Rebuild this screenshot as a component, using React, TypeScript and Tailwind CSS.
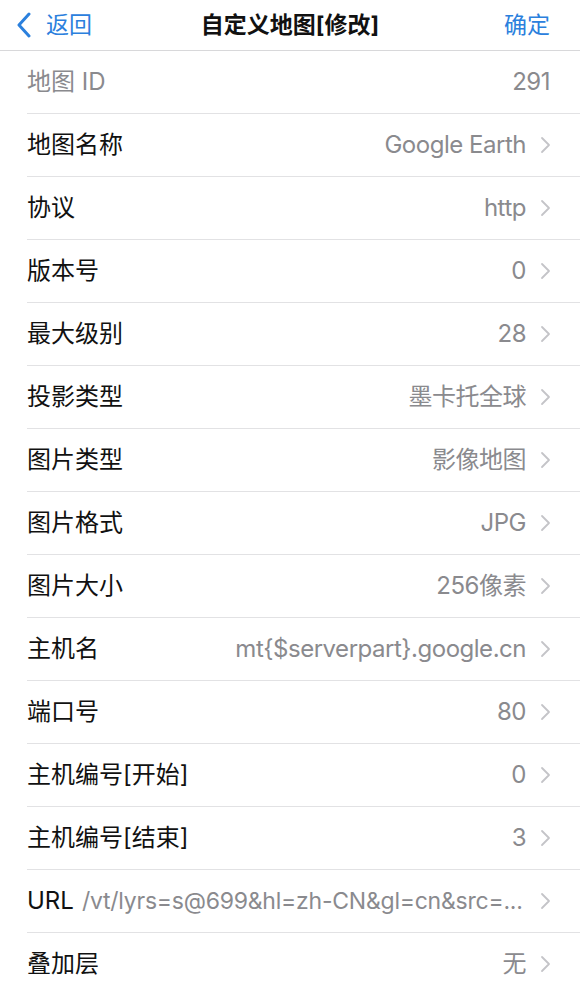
const font = "font-['Inter','Noto_Sans_CJK_SC',sans-serif]";

type Row = { label: string; value: string };

const rows: Row[] = [
  { label: "地图名称", value: "Google Earth" },
  { label: "协议", value: "http" },
  { label: "版本号", value: "0" },
  { label: "最大级别", value: "28" },
  { label: "投影类型", value: "墨卡托全球" },
  { label: "图片类型", value: "影像地图" },
  { label: "图片格式", value: "JPG" },
  { label: "图片大小", value: "256像素" },
  { label: "主机名", value: "mt{$serverpart}.google.cn" },
  { label: "端口号", value: "80" },
  { label: "主机编号[开始]", value: "0" },
  { label: "主机编号[结束]", value: "3" },
];

function Chevron() {
  return (
    <svg width="11" height="18" viewBox="0 0 11 18" className="ml-[14px] shrink-0" aria-hidden>
      <path d="M2 2l7 7-7 7" fill="none" stroke="#c4c4c8" strokeWidth="1.8" strokeLinecap="round" strokeLinejoin="round" />
    </svg>
  );
}

function Cell({ label, value }: Row) {
  return (
    <div className="ml-[27px] h-[63px] flex items-center border-b border-[#e2e2e4] pr-[29px]">
      <span className="text-[24px] text-[#111] whitespace-nowrap">{label}</span>
      <span className="flex-1 text-right text-[24px] tracking-[-0.02em] text-[#8a8a8e] whitespace-nowrap">{value}</span>
      <Chevron />
    </div>
  );
}

export default function App() {
  return (
    <div className={`w-[580px] h-[985px] bg-white overflow-hidden ${font}`}>
      <header className="h-[51px] border-b border-[#d8d8da] flex items-center relative">
        <div className="flex items-center pl-[17px] text-[#2b80dd]">
          <svg width="14" height="26" viewBox="0 0 14 26" aria-hidden>
            <path d="M12 2L2 13l10 11" fill="none" stroke="#2b80dd" strokeWidth="3" strokeLinecap="round" strokeLinejoin="round" />
          </svg>
          <span className="ml-[15px] text-[23px]">返回</span>
        </div>
        <div className="absolute inset-x-0 text-center text-[23px] font-bold text-[#111] pointer-events-none">
          自定义地图[修改]
        </div>
        <span className="ml-auto pr-[30px] text-[23px] text-[#2b80dd]">确定</span>
      </header>

      <div className="ml-[27px] h-[63px] flex items-center border-b border-[#e2e2e4] pr-[30px]">
        <span className="text-[24px] text-[#8a8a8e]">地图 ID</span>
        <span className="flex-1 text-right text-[24px] tracking-[-0.02em] text-[#8a8a8e]">291</span>
      </div>

      {rows.map((r) => (
        <Cell key={r.label} {...r} />
      ))}

      <div className="ml-[27px] h-[63px] flex items-center border-b border-[#e2e2e4] pr-[29px]">
        <span className="text-[24px] text-[#111]">URL</span>
        <span className="ml-[8px] flex-1 text-[23px] tracking-[-0.01em] text-[#8a8a8e] whitespace-nowrap">
          /vt/lyrs=s@699&amp;hl=zh-CN&amp;gl=cn&amp;src=...
        </span>
        <Chevron />
      </div>

      <Cell label="叠加层" value="无" />
    </div>
  );
}
